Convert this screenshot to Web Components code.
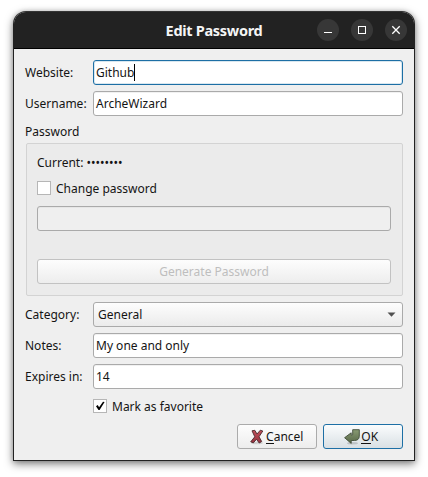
<!DOCTYPE html>
<html lang="en"><head><meta charset="utf-8"><title>Edit Password</title>
<style>
html,body{margin:0;height:100%;background:#fff;overflow:hidden}
body{font:12px/17px "Noto Sans",sans-serif;color:#141414}
u{text-decoration:none;box-shadow:0 -1px #141414 inset;display:inline-block;height:16px}
</style></head><body>
<dialog-window heading="Edit Password">
  <form-row label="Website:"><text-field value="Github" focused></text-field></form-row>
  <form-row label="Username:"><text-field value="ArcheWizard"></text-field></form-row>
  <group-box label="Password">
    <current-password>Current: ••••••••</current-password>
    <check-box>Change password</check-box>
    <text-field disabled></text-field>
    <push-button disabled>Generate Password</push-button>
  </group-box>
  <form-row label="Category:"><combo-box>General</combo-box></form-row>
  <form-row label="Notes:"><text-field value="My one and only"></text-field></form-row>
  <form-row label="Expires in:"><text-field value="14"></text-field></form-row>
  <form-row class="fav"><check-box checked>Mark as favorite</check-box></form-row>
  <button-bar>
    <push-button><cancel-icon slot="icon"></cancel-icon><u>C</u>ancel</push-button>
    <push-button default><ok-icon slot="icon"></ok-icon><u>O</u>K</push-button>
  </button-bar>
</dialog-window>
<script>
const define = (name, render) => customElements.define(name, class extends HTMLElement {
  constructor() {
    super();
    const t = document.createElement('template');
    t.innerHTML = render(this);
    this.attachShadow({mode: 'open'}).append(t.content.cloneNode(true));
  }
});

define('title-bar', el => `<style>
:host{display:grid;grid-template-columns:1fr auto 1fr;align-items:center;height:37px;box-sizing:border-box;background:#222;border-bottom:1px solid #000}
h1{grid-column:2;margin:0;font:bold 14.5px/20px "Noto Sans",sans-serif;letter-spacing:-.3px;color:#f5f5f5;white-space:nowrap}
div{display:flex;gap:12px;justify-content:flex-end;padding-right:7px}
span{width:22px;height:22px;border-radius:50%;background:#373737}
svg{display:block;fill:none;stroke:#fff}
</style><h1><slot></slot></h1><div>
<span><svg width="22" height="22"><path d="M7 13.5h8"/></svg></span>
<span><svg width="22" height="22"><rect x="7.5" y="7.5" width="7" height="7"/></svg></span>
<span><svg width="22" height="22"><path d="M7.3 7.3l7.4 7.4M14.7 7.3l-7.4 7.4" stroke-width="1.3"/></svg></span></div>`);

define('dialog-window', el => `<style>
:host{display:block;box-sizing:border-box;width:402px;height:450px;margin:11px 0 0 13px;border:1px solid #222;border-top-color:#343434;border-radius:13px 13px 0 0;background:#efefef;box-shadow:0 3px 8px rgba(0,0,0,.5),0 0 4px rgba(0,0,0,.15)}
title-bar{border-radius:12px 12px 0 0}
main{display:flex;flex-direction:column;gap:6px;padding:11px 11px 0}
</style><title-bar>${el.getAttribute('heading')}</title-bar><main><slot></slot></main>`);

define('form-row', el => `<style>
:host{display:grid;grid-template-columns:68px 1fr;align-items:center;height:25px}
:host(.fav){height:22px}
label{white-space:nowrap}
</style><label>${el.getAttribute('label') || ''}</label><slot></slot>`);

define('text-field', el => `<style>
:host{display:flex;align-items:center;box-sizing:border-box;height:25px;padding-left:2px;background:#fff;border:1px solid #aaa;border-radius:3px;box-shadow:inset 0 1px #f1f1f1}
:host([focused]){border-color:#1d6fa5;box-shadow:inset 0 0 0 1px #d9e7ef}
:host([disabled]){background:#efefef;box-shadow:inset 0 1px #e6e6e6}
i{width:1px;height:17px;background:#000}
</style><span>${el.getAttribute('value') || ''}</span>${el.hasAttribute('focused') ? '<i></i>' : ''}`);

define('group-box', el => `<style>
:host{display:block}
label{display:block;height:21px;line-height:19px}
div{margin-left:1px;box-sizing:border-box;height:153px;padding:10px 11px 0 10px;background:#ebebeb;border:1px solid #d3d3d3;border-radius:2px;display:flex;flex-direction:column}
</style><label>${el.getAttribute('label')}</label><div><slot></slot></div>`);

define('current-password', el => `<style>:host{display:block;height:17px;white-space:nowrap}</style><slot></slot>`);

define('check-box', el => `<style>
:host{display:flex;align-items:center;gap:5px;height:18px;white-space:nowrap}
:host(:not([checked])){margin:8px 0 9px}
b{box-sizing:border-box;width:14px;height:14px;background:#fff;border:1px solid #b6b6b6}
svg{display:block}
</style><b>${el.hasAttribute('checked') ? '<svg width="12" height="12"><path d="M2 6.2L3.7 5l1.4 2.3L9 1.7 10.6 2 5.6 10H4.5z" fill="#000"/></svg>' : ''}</b><span><slot></slot></span>`);

define('combo-box', el => `<style>
:host{display:flex;align-items:center;justify-content:space-between;box-sizing:border-box;height:25px;padding:0 6px 0 4px;border:1px solid #aaa;border-radius:3px;background:linear-gradient(#fdfdfd,#ebebeb)}
</style><span><slot></slot></span><svg width="9" height="5"><path d="M.5 .5h8L4.5 4.7z" fill="#505050"/></svg>`);

define('push-button', el => `<style>
:host{display:flex;align-items:center;justify-content:center;gap:1.5px;box-sizing:border-box;width:80px;height:25px;padding-right:2px;border:1px solid #ababab;border-radius:3px;background:linear-gradient(#fdfdfd,#ededed);white-space:nowrap}
:host([default]){padding-right:4px;border-color:#1d6fa5;background:linear-gradient(#fafcfd,#d9e0e4)}
:host([disabled]){width:auto;padding:0;margin-top:28px;color:#bebebe;border-color:#c2c2c2}
</style><slot name="icon"></slot><span><slot></slot></span>`);

define('button-bar', el => `<style>:host{display:flex;justify-content:flex-end;gap:6px;margin-top:1px}
::slotted(*){flex:none}</style><slot></slot>`);

define('cancel-icon', el => `<style>:host,svg{display:block}</style>
<svg width="16" height="16" viewBox="0 0 16 16"><defs><linearGradient id="r" x2="0" y2="1"><stop stop-color="#c04f5a"/><stop offset="1" stop-color="#963340"/></linearGradient></defs><ellipse cx="8" cy="14" rx="6" ry="1.3" fill="#000" opacity=".13"/><path d="M3 1.8L5.8 1.3 8 5 11.3 1.2l2.5.8L10 7.8l2.7 4.7-2.5 1.5L7.5 10.2 4.3 13.9 1.7 12.8 5.8 7.8z" fill="url(#r)" stroke="#4a2a2e" stroke-width=".9" stroke-linejoin="round"/></svg>`);

define('ok-icon', el => `<style>:host,svg{display:block}</style>
<svg width="16" height="16" viewBox="0 0 16 16"><defs><linearGradient id="g" x2="0" y2="1"><stop stop-color="#899b73"/><stop offset="1" stop-color="#566747"/></linearGradient></defs><ellipse cx="8.5" cy="14.2" rx="5.5" ry="1.2" fill="#000" opacity=".15"/><path d="M8.7 .7h6.6v6.6c0 2.8-2 4.2-4.8 4.2H7.2v2.9L.6 8.7 7.2 3.8v2.4h.6Q8.7 6.2 8.7 5.2z" fill="url(#g)" stroke="#414d38" stroke-width=".9" stroke-linejoin="round"/></svg>`);
</script>
</body></html>
